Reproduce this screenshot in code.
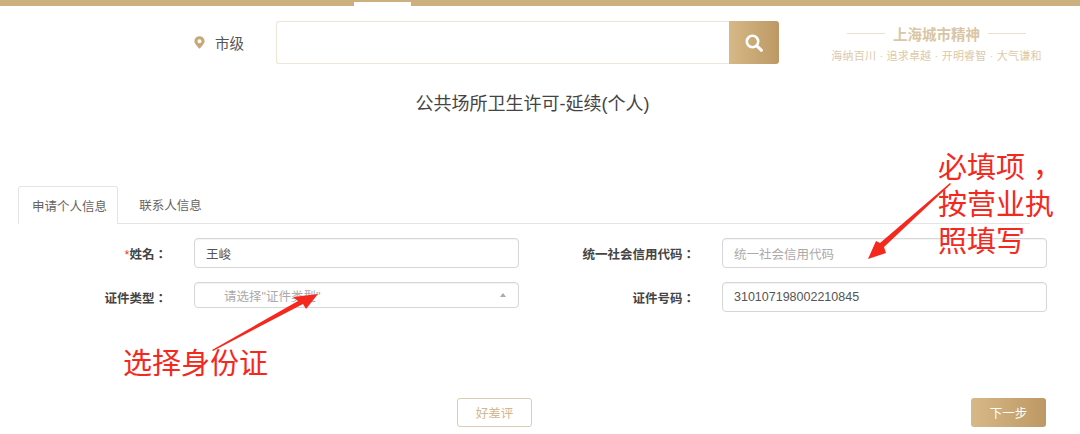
<div class="page">
  <div class="topbar"><span class="notch"></span></div>

  <header class="search-row">
    <div class="loc">
      <svg width="11" height="13" viewBox="0 0 11 13" aria-hidden="true">
        <path fill-rule="evenodd" fill="#c8a877" d="M5.500 0.300C2.600 0.300 0.400 2.500 0.400 5.200 0.400 8 5.500 12.700 5.500 12.700S10.600 8 10.600 5.200C10.600 2.500 8.400 0.300 5.500 0.300ZM5.500 3.200A2 2 0 1 1 5.500 7.200 2 2 0 1 1 5.500 3.200Z"/>
      </svg>
      <span>市级</span>
    </div>
    <div class="search">
      <div class="search-input"></div>
      <div class="search-btn">
        <svg width="20" height="20" viewBox="0 0 20 20" aria-hidden="true">
          <circle cx="8.500" cy="8.500" r="5.700" fill="none" stroke="#fff" stroke-width="2.600"/>
          <path d="M12.800 12.800L17.500 17.300" stroke="#fff" stroke-width="3" stroke-linecap="round"/>
        </svg>
      </div>
    </div>
    <div class="slogan">
      <div class="slogan-top"><i></i><b>上海城市精神</b><i></i></div>
      <div class="slogan-sub">海纳百川 · 追求卓越 · 开明睿智 · 大气谦和</div>
    </div>
  </header>

  <h1>公共场所卫生许可-延续(个人)</h1>

  <nav class="tabs">
    <span class="tab active">申请个人信息</span>
    <span class="tab">联系人信息</span>
  </nav>

  <section class="form">
    <span class="lab"><em>*</em>姓名：</span>
    <div class="field">王峻</div>
    <span class="lab">统一社会信用代码：</span>
    <div class="field ph">统一社会信用代码</div>

    <span class="lab">证件类型：</span>
    <div class="field select ph"><span>请选择"证件类型"</span><u></u></div>
    <span class="lab">证件号码：</span>
    <div class="field">310107198002210845</div>
  </section>

  <footer class="actions">
    <button class="ghost">好差评</button>
    <button class="primary">下一步</button>
  </footer>

  <svg class="arrows" width="1080" height="434" viewBox="0 0 1080 434" aria-hidden="true">
    <path fill="#f5281e" d="M950 183L951 184 884 247 886 253 868 259 876 241 880 243Z"/>
    <path fill="#f5281e" d="M212 350L298 301 293 297 318 294 306 309 303 304 213 351Z"/>
  </svg>
  <div class="note note-a">必填项<span class="comma">，</span><br />按营业执<br />照填写</div>
  <div class="note note-b">选择身份证</div>
</div>

<style>
  :global(body) {
    margin: 0;
    background: #fff;
  }
  .page {
    position: relative;
    width: 1080px;
    height: 434px;
    overflow: hidden;
    font-family: "Liberation Sans", "Noto Sans CJK SC", sans-serif;
    font-size: 12.500px;
    color: #555;
  }
  .topbar {
    height: 6px;
    background: #cdb07f;
    display: flex;
    padding-left: 354px;
    align-items: flex-end;
  }
  .notch {
    width: 57px;
    height: 4px;
    background: #fff;
  }
  .search-row {
    display: flex;
    align-items: flex-start;
    margin-top: 15px;
  }
  .loc {
    display: flex;
    align-items: center;
    gap: 10px;
    width: 82px;
    margin-left: 194px;
    height: 43px;
    font-size: 14.500px;
    color: #555;
  }
  .search {
    display: flex;
    width: 503px;
    height: 43px;
  }
  .search-input {
    flex: 1;
    border: 1px solid #eee6d8;
    border-right: 0;
    border-radius: 3px 0 0 3px;
  }
  .search-btn {
    width: 50px;
    border-radius: 0 3px 3px 0;
    background: linear-gradient(90deg, #d6b987, #bd9864);
    display: flex;
    align-items: center;
    justify-content: center;
  }
  .slogan {
    margin-left: 51px;
    width: 213px;
    text-align: center;
    color: #d8c6a4;
  }
  .slogan-top {
    display: flex;
    align-items: center;
    justify-content: center;
    gap: 8px;
    height: 24px;
  }
  .slogan-top b {
    font-size: 14.500px;
    font-weight: 700;
  }
  .slogan-top i {
    width: 38px;
    height: 1px;
    background: #e8dfce;
  }
  .slogan-sub {
    font-size: 11px;
    line-height: 14px;
    margin-top: 4px;
    white-space: nowrap;
    color: #dccaa9;
    letter-spacing: 0.200px;
  }
  h1 {
    margin: 29px 0 0;
    padding-right: 15px;
    height: 22px;
    line-height: 22px;
    text-align: center;
    font-size: 18px;
    font-weight: 400;
    color: #444;
  }
  .tabs {
    display: flex;
    margin: 71px 50px 0 18px;
    height: 37px;
    border-bottom: 1px solid #e4e4e4;
  }
  .tab {
    display: flex;
    align-items: center;
    justify-content: center;
    width: 100px;
    height: 37px;
    box-sizing: border-box;
    color: #666;
  }
  .tab + .tab {
    width: 105px;
  }
  .tab.active {
    height: 38px;
    padding-left: 3px;
    background: #fff;
    border: 1px solid #e4e4e4;
    border-bottom: 0;
    border-radius: 3px 3px 0 0;
  }
  .form {
    display: grid;
    grid-template-columns: 146px 325px 143px 325px;
    column-gap: 30px;
    row-gap: 14px;
    margin-top: 14px;
    padding-left: 18px;
    align-items: center;
  }
  .lab {
    text-align: right;
    margin-right: -3px;
    font-family: "Liberation Sans", "Noto Sans CJK TC", sans-serif;
    font-size: 12.500px;
    font-weight: 700;
    color: #444;
    white-space: nowrap;
  }
  .lab em {
    color: #e23b3b;
    font-style: normal;
    font-weight: 400;
  }
  .field {
    height: 30px;
    box-sizing: border-box;
    border: 1px solid #d6d6d6;
    border-radius: 4px;
    padding-left: 11px;
    display: flex;
    align-items: center;
    color: #555;
    box-shadow: inset 0 1px 1px rgba(0, 0, 0, 0.05);
  }
  .ph {
    color: #aaa;
  }
  .select {
    height: 26px;
    margin-bottom: 4px;
    padding-left: 29px;
    padding-right: 12px;
    justify-content: space-between;
  }
  .select u {
    width: 0;
    height: 0;
    border-left: 3.500px solid transparent;
    border-right: 3.500px solid transparent;
    border-bottom: 4px solid #aaa;
  }
  .actions {
    display: flex;
    gap: 439px;
    margin-top: 86px;
    padding-left: 457px;
  }
  .actions button {
    width: 75px;
    height: 29px;
    box-sizing: border-box;
    border-radius: 3px;
    font: inherit;
    padding: 0;
  }
  .ghost {
    background: #fff;
    border: 1px solid #dccdb2;
    color: #d0b88e;
  }
  .primary {
    border: 0;
    color: #fff;
    background: linear-gradient(90deg, #d6b987, #bd9864);
  }
  .arrows {
    position: absolute;
    left: 0;
    top: 0;
    pointer-events: none;
  }
  .note {
    position: absolute;
    color: #f5281e;
    font-size: 29px;
    line-height: 37px;
    white-space: nowrap;
  }
  .note-a {
    left: 938px;
    top: 150px;
  }
  .comma {
    position: relative;
    left: 8px;
    top: -1px;
  }
  .note-b {
    left: 123px;
    top: 346px;
  }
</style>
